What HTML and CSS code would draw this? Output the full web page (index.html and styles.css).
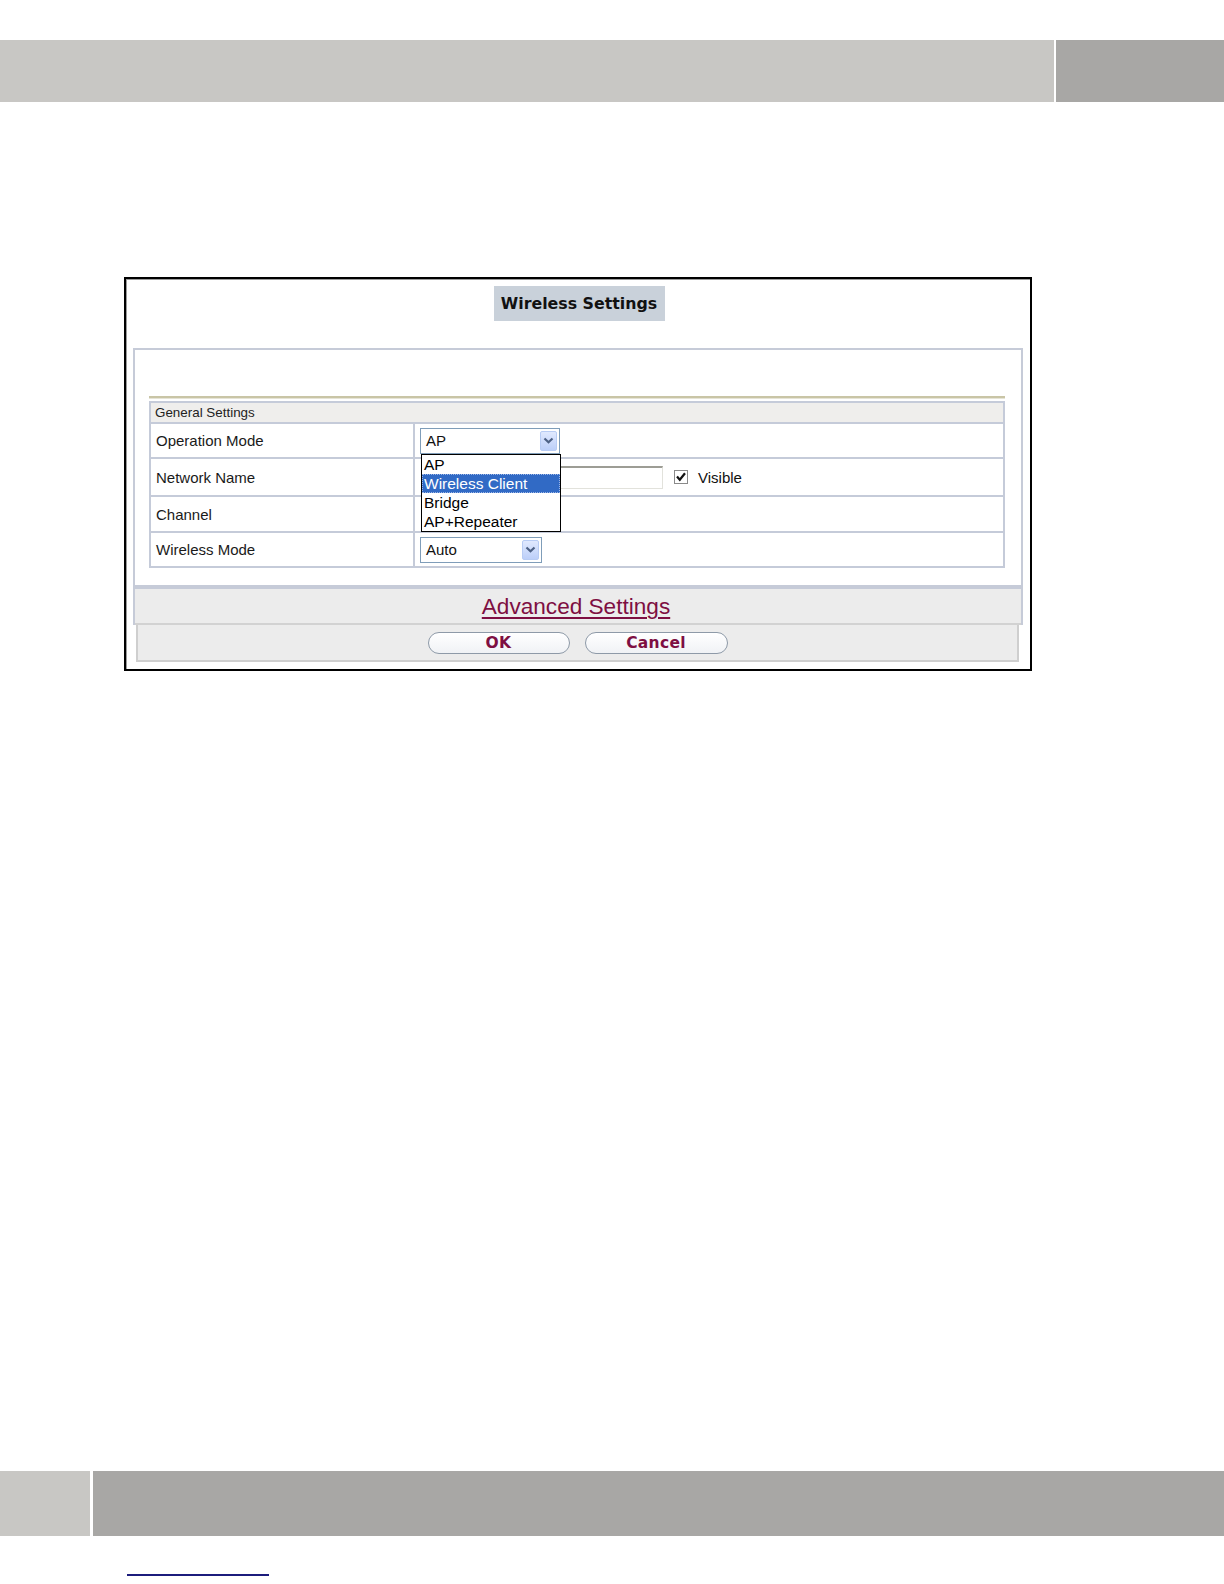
FILE: index.html
```html
<!DOCTYPE html>
<html>
<head>
<meta charset="utf-8">
<title>Wireless Settings</title>
<link rel="stylesheet" href="styles.css">
</head>
<body>
<div class="page">
  <div class="topbar">
    <div class="topbar-main"></div>
    <div class="topbar-side"></div>
  </div>

  <div class="dialog">
    <div class="title-wrap"><div class="title">Wireless Settings</div></div>

    <div class="panel">
      <div class="panel-body">
        <div class="rule"></div>
        <div class="grid">
          <div class="head">General Settings</div>

          <div class="label">Operation Mode</div>
          <div class="value">
            <div class="select select-op">
              <span class="select-text">AP</span>
              <span class="select-btn"><svg width="11" height="7" viewBox="0 0 11 7"><path d="M1.5 1.5 L5.5 5.2 L9.5 1.5" fill="none" stroke="#4d6185" stroke-width="2.2"/></svg></span>
              <ul class="dropdown">
                <li>AP</li>
                <li class="hl">Wireless Client</li>
                <li>Bridge</li>
                <li>AP+Repeater</li>
              </ul>
            </div>
          </div>

          <div class="label">Network Name</div>
          <div class="value value-net">
            <div class="text-input"></div>
            <span class="check"><svg width="14" height="14" viewBox="0 0 14 14"><rect x="0.5" y="0.5" width="13" height="13" fill="#fff" stroke="#8a8a8a"/><path d="M3 6.5 L5.8 9.8 L11 3.2" fill="none" stroke="#111" stroke-width="2.2"/></svg></span>
            <span class="check-label">Visible</span>
          </div>

          <div class="label">Channel</div>
          <div class="value"></div>

          <div class="label">Wireless Mode</div>
          <div class="value">
            <div class="select select-mode">
              <span class="select-text">Auto</span>
              <span class="select-btn"><svg width="11" height="7" viewBox="0 0 11 7"><path d="M1.5 1.5 L5.5 5.2 L9.5 1.5" fill="none" stroke="#4d6185" stroke-width="2.2"/></svg></span>
            </div>
          </div>
        </div>
      </div>
      <div class="advanced"><a class="adv-link" href="#">Advanced Settings</a></div>
    </div>

    <div class="buttons">
      <button class="btn">OK</button>
      <button class="btn">Cancel</button>
    </div>
  </div>

  <div class="footer">
    <div class="footbar">
      <div class="footbar-side"></div>
      <div class="footbar-main"></div>
    </div>
    <div class="footline"></div>
  </div>
</div>
</body>
</html>
```

FILE: styles.css
```css
html, body {
  margin: 0;
  padding: 0;
  background: #ffffff;
}

.page {
  height: 1584px;
  display: flex;
  flex-direction: column;
  font-family: "Liberation Sans", Arial, sans-serif;
  color: #111;
}

.topbar {
  margin-top: 40px;
  height: 62px;
  display: flex;
  gap: 2px;
}
.topbar-main { flex: 1; background: #c8c7c4; }
.topbar-side { width: 168px; background: #a8a7a5; }

.dialog {
  margin-top: 175px;
  margin-left: 124px;
  border: 2px solid #000;
  box-shadow: inset 1px 1px 0 #9a9a9a;
  padding: 7px 5px 7px 7px;
  box-sizing: content-box;
  width: 892px;
}

.title-wrap {
  display: flex;
  justify-content: center;
}
.title {
  width: 171px;
  height: 35px;
  background: #c9d1da;
  font-family: "DejaVu Sans", Verdana, sans-serif;
  font-weight: bold;
  font-size: 15.8px;
  line-height: 35px;
  text-align: center;
  color: #111;
}

.panel {
  margin-top: 27px;
  width: 886px;
  border: 2px solid #c6cbd8;
  border-bottom: none;
}

.panel-body {
  padding: 46px 16px 17px 14px;
}

.rule {
  height: 2px;
  background: #c9c5a6;
  border-bottom: 1px solid #e6e4d6;
  margin-bottom: 2px;
}

.grid {
  display: grid;
  grid-template-columns: 262px 1fr;
  grid-template-rows: 19px 33px 36px 34px 33px;
  gap: 2px;
  background: #c5cbd9;
  border: 2px solid #c5cbd9;
  font-size: 15px;
}
.head {
  grid-column: 1 / 3;
  background: #efeeec;
  font-size: 13.4px;
  line-height: 19px;
  padding-left: 4px;
  color: #222;
}
.label {
  background: #fff;
  display: flex;
  align-items: center;
  padding-left: 5px;
  color: #1a1a1a;
}
.value {
  background: #fff;
  display: flex;
  align-items: center;
  padding-left: 5px;
}
.value-net { padding-left: 6px; }

.select {
  position: relative;
  height: 26px;
  box-sizing: border-box;
  border: 1px solid #7f9db9;
  background: #fff;
  display: flex;
  align-items: center;
}
.select-op { width: 140px; }
.select-mode { width: 122px; }
.select-text {
  flex: 1;
  padding-left: 5px;
  font-size: 15px;
}
.select-btn {
  width: 17px;
  height: 20px;
  margin-right: 2px;
  box-sizing: border-box;
  border: 1px solid #b8ccf4;
  border-radius: 2px;
  background: linear-gradient(#e0e9fe, #bccff9);
  display: flex;
  align-items: center;
  justify-content: center;
}

.dropdown {
  position: absolute;
  left: 0;
  top: 25px;
  width: 140px;
  box-sizing: border-box;
  margin: 0;
  padding: 0;
  list-style: none;
  border: 1px solid #000;
  background: #fff;
  z-index: 5;
  font-size: 15.5px;
}
.dropdown li {
  height: 19px;
  line-height: 19px;
  padding-left: 2px;
  color: #000;
}
.dropdown li.hl {
  background: #316ac5;
  color: #fff;
  outline: 1px dotted #9db6e6;
  outline-offset: -1px;
}

.text-input {
  width: 242px;
  height: 23px;
  box-sizing: border-box;
  border: 1px solid #e2e2dc;
  border-top: 2px solid #9d9d95;
  background: #fff;
}
.check {
  margin-left: 11px;
  display: flex;
}
.check-label {
  margin-left: 10px;
  font-size: 15px;
}

.advanced {
  border-top: 4px solid #c6cbd8;
  border-bottom: 2px solid #d2d2d2;
  height: 34px;
  background: #ececec;
  display: flex;
  align-items: center;
  justify-content: center;
}
.adv-link {
  font-size: 22.6px;
  color: #7e0f42;
  text-decoration: underline;
  text-decoration-thickness: 2px;
  text-underline-offset: 3px;
  margin-top: 2px;
  margin-right: 4px;
}

.buttons {
  margin-left: 3px;
  width: 879px;
  height: 35px;
  background: #ececec;
  border: 2px solid #cfcfcf;
  border-top: none;
  display: flex;
  align-items: center;
  justify-content: center;
  gap: 15px;
}
.btn {
  width: 142px;
  height: 22px;
  border: 1px solid #8e9aa8;
  border-radius: 11px;
  background: linear-gradient(#ffffff, #f0f2f5);
  font-family: "DejaVu Sans", Verdana, sans-serif;
  font-weight: bold;
  font-size: 15.5px;
  color: #7e0f42;
  padding: 0;
  line-height: 20px;
  letter-spacing: 0.3px;
}
.btn + .btn { width: 143px; }

.footer {
  margin-top: auto;
}
.footbar {
  height: 65px;
  display: flex;
  gap: 3px;
}
.footbar-side { width: 90px; background: #c8c7c4; }
.footbar-main { flex: 1; background: #a8a7a5; }
.footline {
  margin: 38px 0 8px 127px;
  width: 142px;
  height: 2px;
  background: #1c1c7c;
}
```
